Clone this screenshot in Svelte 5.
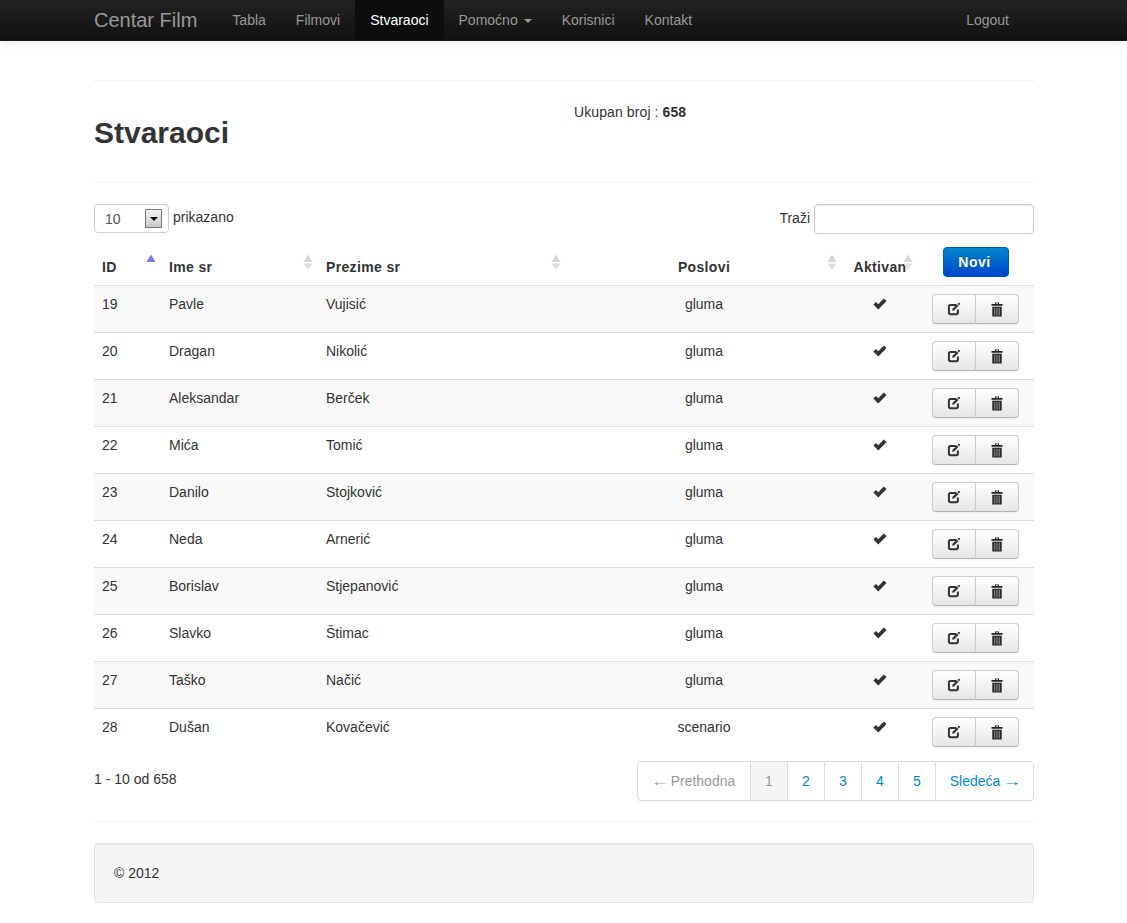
<script>
  const rows = [
    [19, 'Pavle', 'Vujisić', 'gluma'],
    [20, 'Dragan', 'Nikolić', 'gluma'],
    [21, 'Aleksandar', 'Berček', 'gluma'],
    [22, 'Mića', 'Tomić', 'gluma'],
    [23, 'Danilo', 'Stojković', 'gluma'],
    [24, 'Neda', 'Arnerić', 'gluma'],
    [25, 'Borislav', 'Stjepanović', 'gluma'],
    [26, 'Slavko', 'Štimac', 'gluma'],
    [27, 'Taško', 'Načić', 'gluma'],
    [28, 'Dušan', 'Kovačević', 'scenario']
  ];
  const navItems = ['Tabla', 'Filmovi', 'Stvaraoci', 'Pomoćno', 'Korisnici', 'Kontakt'];
  const pages = [2, 3, 4, 5];
</script>

{#snippet sort(active)}
  <svg class="sort" width="10" height="16" viewBox="0 0 10 16">
    <path d="M5 0.5 L9.5 8 L0.5 8 Z" fill={active ? '#7b7bdc' : '#d6d6d6'} />
    {#if !active}<path d="M0.5 9.5 L9.5 9.5 L5 16 Z" fill="#e0e0e0" />{/if}
  </svg>
{/snippet}

<nav class="navbar">
  <div class="container nav-inner">
    <span class="brand">Centar Film</span>
    <ul class="nav">
      {#each navItems as item}
        <li class:active={item === 'Stvaraoci'}>
          {item}{#if item === 'Pomoćno'}<span class="caret"></span>{/if}
        </li>
      {/each}
    </ul>
    <ul class="nav right"><li>Logout</li></ul>
  </div>
</nav>

<main class="container">
  <hr class="first" />
  <div class="header">
    <h1>Stvaraoci</h1>
    <p class="total">Ukupan broj : <b>658</b></p>
  </div>
  <hr class="second" />

  <div class="filters">
    <label class="length">
      <span class="fake-select">
        <span>10</span>
        <span class="arrow-box"><span class="arrow"></span></span>
      </span>
      <span class="length-text">prikazano</span>
    </label>
    <label class="search">Traži <input type="text" /></label>
  </div>

  <table>
    <colgroup>
      <col style="width:67px" /><col style="width:157px" /><col style="width:248px" />
      <col style="width:276px" /><col style="width:76px" /><col style="width:116px" />
    </colgroup>
    <thead>
      <tr>
        <th>ID{@render sort(true)}</th>
        <th>Ime sr{@render sort(false)}</th>
        <th>Prezime sr{@render sort(false)}</th>
        <th class="center">Poslovi{@render sort(false)}</th>
        <th class="center tight">Aktivan{@render sort(false)}</th>
        <th class="center"><button class="novi">Novi</button></th>
      </tr>
    </thead>
    <tbody>
      {#each rows as r}
        <tr>
          <td>{r[0]}</td>
          <td>{r[1]}</td>
          <td>{r[2]}</td>
          <td class="center">{r[3]}</td>
          <td class="center">
            <svg class="check" width="14" height="12" viewBox="0 0 14 12">
              <path d="M0.4 6.6 L3 4 L5.3 6.2 L10.8 0.4 L13.6 3 L5.3 11.6 Z" fill="#333" />
            </svg>
          </td>
          <td class="center">
            <div class="btn-group">
              <button class="btn" aria-label="Izmeni">
                <svg width="14" height="14" viewBox="0 0 14 14">
                  <path d="M9.5 3 H3.6 Q1.9 3 1.9 4.7 V10.6 Q1.9 12.2 3.6 12.2 H9.2 Q10.9 12.2 10.9 10.6 V7.5" fill="none" stroke="#333" stroke-width="2" />
                  <path d="M5.5 6.7 L10 2.4 L11.5 3.9 L7 8.4 L5.2 8.8 Z" fill="#333" />
                  <path d="M11 1 L12.8 1 L12.8 2.8 L11.9 3.2 L10.7 2 Z" fill="#333" />
                </svg>
              </button>
              <button class="btn" aria-label="Obriši">
                <svg width="14" height="15" viewBox="0 0 14 15">
                  <path d="M5 0.5 H9 V2 H12.5 V3.7 H1.5 V2 H5 Z M6 1.3 V2 H8 V1.3 Z" fill="#222" fill-rule="evenodd" />
                  <path d="M2.3 4.7 H11.7 V14.5 H2.3 Z" fill="#222" />
                  <path d="M4.4 5.7 V13.5 M6.2 5.7 V13.5 M7.9 5.7 V13.5 M9.6 5.7 V13.5" stroke="#999" stroke-width="0.8" />
                </svg>
              </button>
            </div>
          </td>
        </tr>
      {/each}
    </tbody>
  </table>

  <div class="table-foot">
    <div class="info">1 - 10 od 658</div>
    <ul class="pagination">
      <li class="disabled prev"><span class="wide">←</span> Prethodna</li>
      <li class="current">1</li>
      {#each pages as p}<li>{p}</li>{/each}
      <li class="next">Sledeća <span class="wide right">→</span></li>
    </ul>
  </div>

  <hr class="third" />
  <footer>© 2012</footer>
</main>

<style>
  :global(body) {
    margin: 0;
    background: #fff;
    color: #333;
    font-family: "Liberation Sans", Arial, sans-serif;
    font-size: 14px;
    line-height: 20px;
  }
  .container { width: 940px; margin: 0 0 0 94px; }
  .navbar {
    height: 40px;
    border-bottom: 1px solid #1a1a1a;
    background: linear-gradient(to bottom, #222222, #111111);
    box-shadow: 0 1px 10px rgba(0, 0, 0, 0.1);
  }
  .nav-inner { display: flex; align-items: stretch; height: 40px; }
  .brand {
    font-size: 20px;
    line-height: 40px;
    color: #999;
    padding-right: 20px;
  }
  .nav { display: flex; list-style: none; margin: 0; padding: 0; }
  .nav li { padding: 0 15px; line-height: 40px; color: #999; }
  .nav li.active { color: #fff; background: #0d0d0d; }
  .nav.right { margin-left: auto; margin-right: 10px; }
  .caret {
    display: inline-block;
    margin-left: 6px;
    vertical-align: 2px;
    border-left: 4px solid transparent;
    border-right: 4px solid transparent;
    border-top: 4px solid #999;
  }
  hr { border: 0; border-top: 1px solid #eee; margin: 0; }
  hr.first { margin-top: 39px; }
  .header { display: flex; height: 101px; }
  h1 {
    margin: 33px 0 0;
    width: 480px;
    font-size: 30px;
    line-height: 38px;
    font-weight: bold;
  }
  .total { margin: 21px 0 0; letter-spacing: 0.1px; }
  .filters {
    display: flex;
    justify-content: space-between;
    margin-top: 21px;
    height: 35px;
  }
  .length { display: flex; align-items: flex-start; }
  .fake-select {
    box-sizing: border-box;
    width: 75px;
    height: 29px;
    padding-left: 10px;
    display: flex;
    align-items: center;
    justify-content: space-between;
    border: 1px solid #ccc;
    border-radius: 4px;
    color: #555;
    padding-right: 6px;
  }
  .arrow-box {
    box-sizing: border-box;
    width: 17px;
    height: 19px;
    border: 1px solid #777;
    background: linear-gradient(to bottom, #f2f2f2, #c8c8c8);
    display: flex;
    align-items: center;
    justify-content: center;
  }
  .arrow {
    border-left: 4px solid transparent;
    border-right: 4px solid transparent;
    border-top: 4px solid #000;
  }
  .length-text { margin-left: 4px; line-height: 26px; }
  .search { display: flex; align-items: flex-start; gap: 4px; line-height: 28px; }
  input {
    box-sizing: border-box;
    width: 220px;
    height: 30px;
    margin: 0;
    border: 1px solid #ccc;
    border-radius: 4px;
    background: #fff;
    box-shadow: inset 0 1px 1px rgba(0, 0, 0, 0.075);
  }
  table {
    width: 940px;
    table-layout: fixed;
    border-collapse: collapse;
    border-spacing: 0;
  }
  th, td { padding: 8px; text-align: left; vertical-align: top; line-height: 20px; }
  th { position: relative; vertical-align: bottom; font-weight: bold; letter-spacing: 0.35px; }
  td { border-top: 1px solid #ddd; }
  tbody tr:nth-child(odd) td { background: #f9f9f9; }
  .center { text-align: center; }
  .tight { padding-left: 0; padding-right: 0; }
  .sort { position: absolute; right: 5px; top: 15px; }
  .novi {
    box-sizing: border-box;
    width: 66px;
    height: 30px;
    padding: 0 3px 0 0;
    display: block;
    margin: 0 auto;
    border: 1px solid #0055b3;
    border-radius: 4px;
    background: linear-gradient(to bottom, #0088cc, #0044cc);
    color: #fff;
    font: bold 14px "Liberation Sans", Arial, sans-serif;
    letter-spacing: 0.5px;
    text-shadow: 0 -1px 0 rgba(0, 0, 0, 0.25);
  }
  .check { display: block; margin: 4px auto 0; }
  .btn-group { display: flex; width: 87px; margin: 0 0 0 6px; }
  .btn {
    box-sizing: border-box;
    flex: 1;
    height: 30px;
    padding: 0;
    display: flex;
    align-items: center;
    justify-content: center;
    background: linear-gradient(to bottom, #ffffff, #e6e6e6);
    border: 1px solid #ccc;
    border-bottom-color: #b3b3b3;
    box-shadow: inset 0 1px 0 rgba(255, 255, 255, 0.2), 0 1px 2px rgba(0, 0, 0, 0.05);
  }
  .btn:first-child { border-radius: 4px 0 0 4px; }
  .btn:last-child { border-radius: 0 4px 4px 0; margin-left: -1px; }
  .table-foot { display: flex; justify-content: space-between; margin-top: 6px; }
  .info { margin-top: 8px; }
  .pagination {
    display: flex;
    list-style: none;
    margin: 0;
    padding: 0;
    height: 40px;
    box-sizing: border-box;
    border: 1px solid #ddd;
    border-radius: 4px;
    box-shadow: 0 1px 2px rgba(0, 0, 0, 0.05);
    color: #0088cc;
  }
  .pagination li {
    width: 36px;
    text-align: center;
    line-height: 38px;
    border-left: 1px solid #ddd;
  }
  .pagination li.prev { width: 112px; border-left: 0; }
  .pagination li.next { width: 97px; }
  .wide { display: inline-block; transform: scaleX(1.3); }
  .wide.right { margin-left: 1px; }
  .disabled { color: #999; }
  .current { color: #999; background: #f5f5f5; }
  hr.third { margin-top: 20px; }
  footer {
    box-sizing: border-box;
    height: 60px;
    margin: 21px 0 20px;
    padding: 19px;
    border: 1px solid #e3e3e3;
    border-radius: 4px;
    background: #f5f5f5;
    box-shadow: inset 0 1px 1px rgba(0, 0, 0, 0.05);
  }
</style>
